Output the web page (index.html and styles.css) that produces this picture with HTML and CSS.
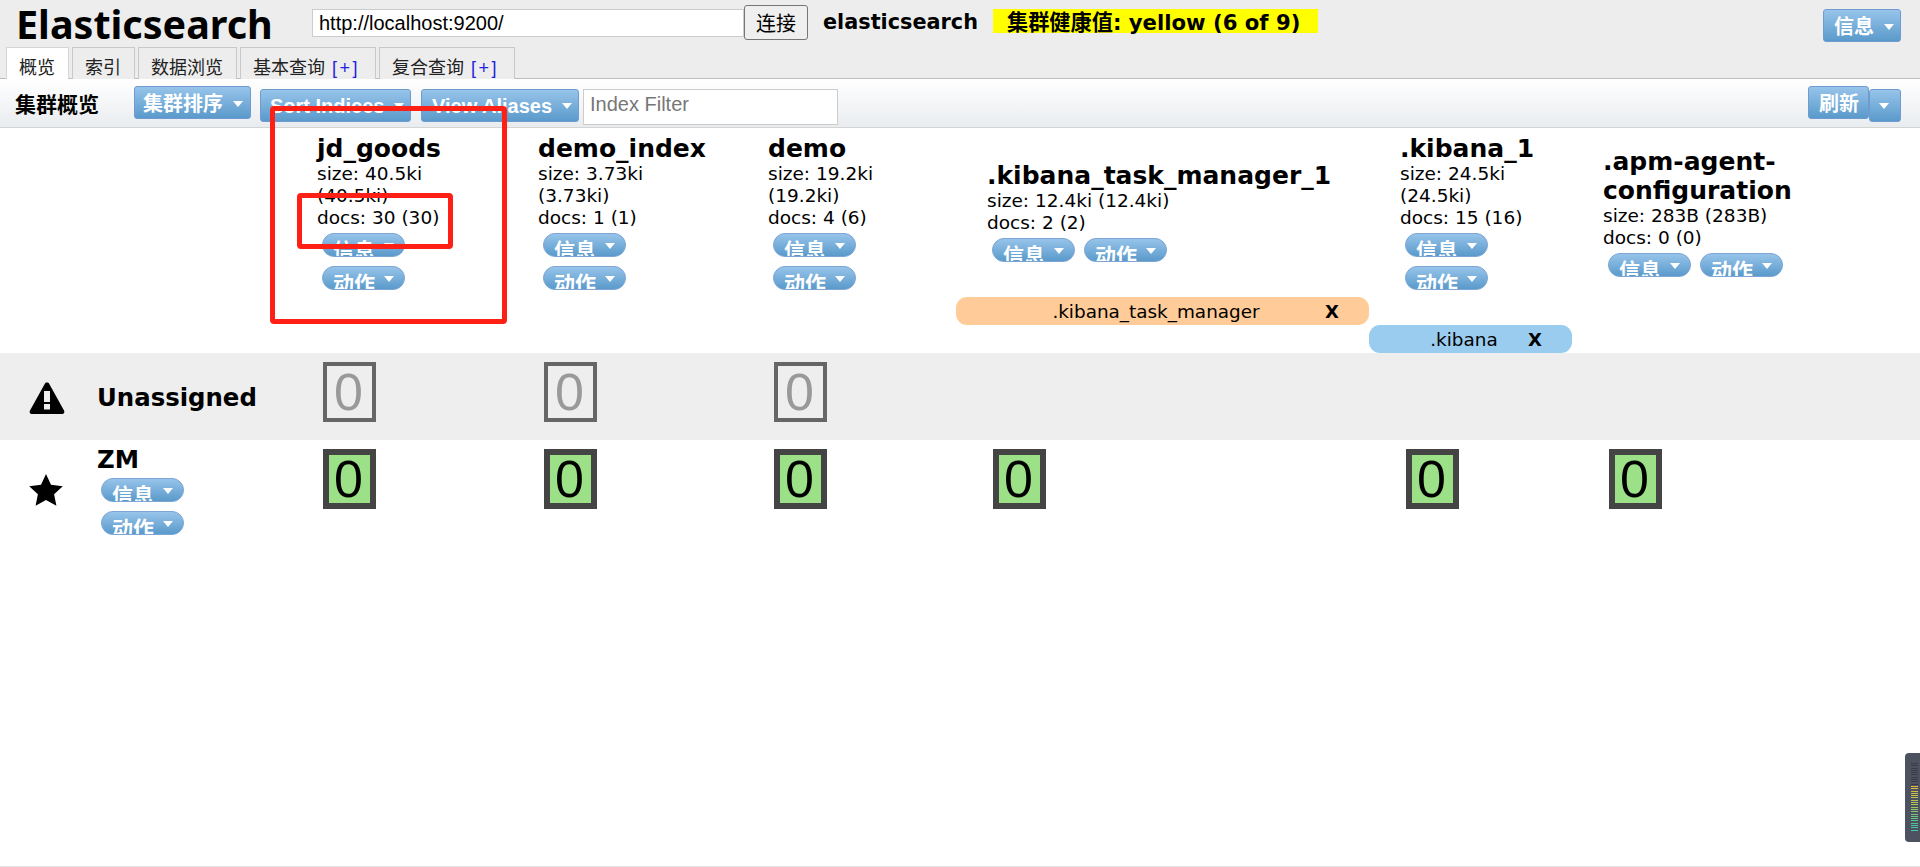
FILE: index.html
```html
<!DOCTYPE html>
<html lang="zh">
<head>
<meta charset="utf-8">
<title>Elasticsearch</title>
<link rel="stylesheet" href="styles.css">
</head>
<body>
<header class="top">
  <div class="top-row">
    <h1 class="brand">Elasticsearch</h1>
    <input class="url" type="text" value="http://localhost:9200/">
    <button class="connect">连接</button>
    <span class="cluster">elasticsearch</span>
    <span class="health">集群健康值: yellow (6 of 9)</span>
    <a class="btn btn-info">信息<i class="caret"></i></a>
  </div>
  <nav class="tabs">
    <a class="tab tab-on">概览</a>
    <a class="tab">索引</a>
    <a class="tab">数据浏览</a>
    <a class="tab">基本查询 <b class="plus">[+]</b></a>
    <a class="tab">复合查询 <b class="plus">[+]</b></a>
  </nav>
</header>
<div class="toolbar">
  <h2 class="tool-title">集群概览</h2>
  <a class="btn btn-sort">集群排序<i class="caret"></i></a>
  <a class="btn btn-low btn-indices">Sort Indices<i class="caret"></i></a>
  <a class="btn btn-low btn-alias">View Aliases<i class="caret"></i></a>
  <input class="filter" type="text" placeholder="Index Filter">
  <div class="refresh">
    <a class="btn btn-refresh">刷新</a>
    <a class="btn btn-low btn-more"><i class="caret"></i></a>
  </div>
</div>
<table class="grid">
  <colgroup>
    <col class="c0"><col class="c1"><col class="c2"><col class="c3"><col class="c4"><col class="c5"><col class="c6"><col>
  </colgroup>
  <thead>
    <tr class="names">
      <th></th>
      <th><h3>jd_goods</h3><p>size: 40.5ki (40.5ki)<br>docs: 30 (30)</p><div class="pills"><a class="pill">信息<i class="caret"></i></a><a class="pill">动作<i class="caret"></i></a></div></th>
      <th><h3>demo_index</h3><p>size: 3.73ki (3.73ki)<br>docs: 1 (1)</p><div class="pills"><a class="pill">信息<i class="caret"></i></a><a class="pill">动作<i class="caret"></i></a></div></th>
      <th><h3>demo</h3><p>size: 19.2ki (19.2ki)<br>docs: 4 (6)</p><div class="pills"><a class="pill">信息<i class="caret"></i></a><a class="pill">动作<i class="caret"></i></a></div></th>
      <th><h3>.kibana_task_manager_1</h3><p>size: 12.4ki (12.4ki)<br>docs: 2 (2)</p><div class="pills"><a class="pill">信息<i class="caret"></i></a><a class="pill">动作<i class="caret"></i></a></div></th>
      <th><h3>.kibana_1</h3><p>size: 24.5ki (24.5ki)<br>docs: 15 (16)</p><div class="pills"><a class="pill">信息<i class="caret"></i></a><a class="pill">动作<i class="caret"></i></a></div></th>
      <th><h3>.apm-agent-configuration</h3><p>size: 283B (283B)<br>docs: 0 (0)</p><div class="pills"><a class="pill">信息<i class="caret"></i></a><a class="pill">动作<i class="caret"></i></a></div></th>
      <th></th>
    </tr>
    <tr class="alias">
      <td colspan="4"></td>
      <td><div class="bar bar-orange"><span>.kibana_task_manager</span><b>X</b></div></td>
      <td colspan="3"></td>
    </tr>
    <tr class="alias">
      <td colspan="5"></td>
      <td><div class="bar bar-blue"><span>.kibana</span><b>X</b></div></td>
      <td colspan="2"></td>
    </tr>
  </thead>
  <tbody>
    <tr class="row-un">
      <td>
        <div class="node">
          <svg class="ico" width="36" height="34" viewBox="0 0 36 34"><path d="M18 1.500c1 0 1.800.5 2.300 1.400l14.700 26.500c1 1.800-.2 3.600-2.200 3.600H3.200c-2 0-3.200-1.800-2.200-3.600L15.700 2.900C16.200 2 17 1.500 18 1.500z" fill="#000"/><rect x="15" y="10" width="6" height="11" fill="#eee"/><rect x="15" y="23" width="6" height="5.500" fill="#eee"/></svg>
          <div class="node-name">Unassigned</div>
        </div>
      </td>
      <td class="cell"><div class="shard shard-un">0</div></td>
      <td class="cell"><div class="shard shard-un">0</div></td>
      <td class="cell"><div class="shard shard-un">0</div></td>
      <td colspan="4"></td>
    </tr>
    <tr class="row-zm">
      <td>
        <div class="node">
          <svg class="ico ico-star" width="34" height="32" viewBox="0 0 34 32"><path d="M17 0l5 10.800 11.800 1.400-8.700 8 2.300 11.600L17 26l-10.400 5.800 2.300-11.600-8.700-8L12 10.800z" fill="#000"/></svg>
          <div class="node-name">ZM<div class="pills pills-node"><a class="pill">信息<i class="caret"></i></a><a class="pill">动作<i class="caret"></i></a></div></div>
        </div>
      </td>
      <td class="cell"><div class="shard">0</div></td>
      <td class="cell"><div class="shard">0</div></td>
      <td class="cell"><div class="shard">0</div></td>
      <td class="cell"><div class="shard">0</div></td>
      <td class="cell"><div class="shard">0</div></td>
      <td class="cell"><div class="shard">0</div></td>
      <td></td>
    </tr>
  </tbody>
</table>
<div class="mark mark-outer"></div>
<div class="mark mark-inner"></div>
<div class="meter"><div class="meter-bars"></div></div>
<div class="edge"></div>
</body>
</html>
```

FILE: styles.css
```css
* { box-sizing: border-box; }
html, body { margin: 0; padding: 0; height: 867px; overflow: hidden; background: #fff; }
body { position: relative; font-family: "DejaVu Sans", "Noto Sans CJK SC", sans-serif; color: #000; }

.top { height: 79px; background: #ededed; border-bottom: 1px solid #bdbdbd; }
.top-row { height: 47px; display: flex; align-items: flex-start; position: relative; }
.brand { margin: 1px 0 0 16px; width: 296px; font: 700 39.500px/46px "Noto Sans", "Noto Sans CJK SC", sans-serif; }
.url { width: 432px; height: 28px; margin-top: 9px; padding: 0 6px; border: 1px solid #ccc; background: #fff; font: 20px "Liberation Sans", sans-serif; color: #000; outline: none; }
.connect { width: 64px; height: 35px; margin: 5px 0 0 0; padding: 0; border: 1px solid #767676; border-radius: 3px; background: #efefef; font: 20px "Noto Sans CJK SC", sans-serif; color: #000; }
.cluster { margin: 7px 0 0 15px; font: 700 20.800px/30px "DejaVu Sans", sans-serif; }
.health { margin: 9px 0 0 15px; width: 325px; height: 24px; padding-left: 14px; background: #ff0; font: 700 21.200px/28px "DejaVu Sans", "Noto Sans CJK SC", sans-serif; white-space: nowrap; }

.btn { display: inline-flex; align-items: center; box-sizing: border-box; height: 33px; border: 1px solid #6f9bd0; border-radius: 3px; background: linear-gradient(#97c4ea, #5a9acb); color: #fff; font: 700 20px/31px "Liberation Sans", "Noto Sans CJK SC", sans-serif; white-space: nowrap; overflow: hidden; padding: 3px 0 0 9px; }
.caret { display: inline-block; width: 0; height: 0; border-left: 5.500px solid transparent; border-right: 5.500px solid transparent; border-top: 6px solid #fff; }
.btn .caret { margin-left: 10px; }
.top-row .btn-info { position: absolute; right: 0; width: 78px; margin: 9px 19px 0 0; padding-left: 10px; }

.tabs { display: flex; height: 32px; padding-left: 6px; gap: 3px; align-items: flex-start; }
.tab { height: 32px; padding: 0 12px; border: 1px solid #c8c8c8; border-bottom: 0; background: #ededed; font: 18px/36px "Noto Sans CJK SC", sans-serif; white-space: nowrap; display: block; color: #222; }
.tab:nth-child(1) { width: 63px; }
.tab:nth-child(2) { width: 63px; }
.tab:nth-child(3) { width: 99px; }
.tab:nth-child(4) { width: 136px; }
.tab:nth-child(5) { width: 136px; }
.tab-on { height: 32px; background: #fff; border-color: #d5d5d5; position: relative; }
.plus { font-weight: 400; color: #2323e0; font-family: "Liberation Sans", sans-serif; font-size: 18px; letter-spacing: 2.500px; margin-left: 3px; }

.toolbar { height: 49px; display: flex; align-items: flex-start; background: linear-gradient(#fff, #e9ecef); border-bottom: 1px solid #d4d4d4; }
.tool-title { width: 119px; margin: 6px 0 0 15px; font: 700 21px/36px "Noto Sans CJK SC", sans-serif; }
.btn-sort { width: 117px; margin-top: 7px; padding-left: 8px; }
.btn-low { margin-top: 10px; padding-top: 1px; }
.btn-indices { width: 151px; margin-left: 9px; }
.btn-alias { width: 158px; margin-left: 10px; padding-left: 10px; }
.filter { width: 255px; height: 36px; margin: 10px 0 0 4px; padding: 0 6px 6px; border: 1px solid #ccc; background: #fff; font: 20px "Liberation Sans", sans-serif; outline: none; }
.filter::placeholder { color: #777; opacity: 1; }
.refresh { margin-left: auto; margin-right: 19px; display: flex; align-items: flex-start; }
.btn-refresh { width: 61px; margin-top: 7px; padding-left: 10px; }
.btn-more { width: 32px; padding-left: 9px; }
.btn-more .caret { margin-left: 0; }

.grid { width: 100%; table-layout: fixed; border-collapse: collapse; }
.c0 { width: 286px; } .c1 { width: 221px; } .c2 { width: 230px; } .c3 { width: 219px; } .c4 { width: 413px; } .c5 { width: 203px; } .c6 { width: 251px; }
th, td { padding: 0; }
.names { height: 169px; }
.names th { vertical-align: middle; text-align: left; font-weight: 400; padding: 0 30px 2px 31px; }
h3 { margin: 0; font: 700 25px/29px "DejaVu Sans", sans-serif; }
.names p { margin: 0; font-size: 18.500px; line-height: 22px; }
.pills { display: flex; flex-wrap: wrap; gap: 9px; padding-left: 5px; margin-top: 4px; }
.pill { width: 83px; height: 24px; display: inline-flex; align-items: flex-start; padding-left: 10px; border: 1px solid #7ea6d4; border-radius: 12px; overflow: hidden; background: linear-gradient(#97c4ea, #5a9acb); color: #fff; font: 700 21px/30px "Noto Sans CJK SC", sans-serif; }
.pill .caret { margin: 9px 0 0 9px; }
.alias { height: 28px; }
.bar { height: 28px; position: relative; display: flex; align-items: center; border-radius: 11px; font-size: 18.400px; padding-right: 13px; }
.bar span { flex: 1; text-align: center; }
.bar b { position: absolute; right: 30px; font-size: 18px; }
.bar-orange { background: #ffcc99; }
.bar-blue { background: #99ccee; }

.row-un { height: 87px; background: #eee; }
.row-zm { height: 100px; }
td:has(.node) { vertical-align: top; }
.node { display: flex; align-items: center; padding-left: 29px; }
.row-un .node { height: 87px; padding-top: 2px; }
.row-zm .node { height: 100px; }
.ico { display: block; flex: none; }
.node-name { margin-left: 32px; font: 700 24.400px/29px "DejaVu Sans", sans-serif; }
.ico-star { margin-right: 2px; }
.pills-node { margin-top: 4px; padding-left: 4px; width: 100px; }
.cell { vertical-align: top; padding: 9px 0 0 37px; }
.shard { width: 53px; height: 60px; padding-right: 2px; border: 6px solid #444; background: #9ce087; font: 52px/48px "Liberation Sans", sans-serif; text-align: center; color: #000; }
.shard-un { border: 4px solid #666; background: #eee; color: #999; line-height: 52px; }

.mark { position: absolute; border: 5px solid #ff2015; border-radius: 4px; pointer-events: none; }
.mark-outer { left: 270px; top: 106px; width: 237px; height: 218px; }
.mark-inner { left: 297px; top: 193px; width: 156px; height: 56px; }

.meter { position: absolute; left: 1905px; top: 753px; width: 15px; height: 89px; background: #4d5260; border-radius: 4px 0 0 4px; padding: 10px 0 0 6px; }
.meter-bars { width: 7px; height: 69px; background: repeating-linear-gradient(transparent 0, transparent 1px, #4d5260 1px, #4d5260 2.300px), linear-gradient(#383c48 0, #383c48 33%, #e6b83c 33%, #a9c95a 62%, #4fc48c 85%, #3cc8ac 100%); }
.edge { position: absolute; left: 0; right: 0; bottom: 0; height: 1px; background: #e2e2e2; }
```
